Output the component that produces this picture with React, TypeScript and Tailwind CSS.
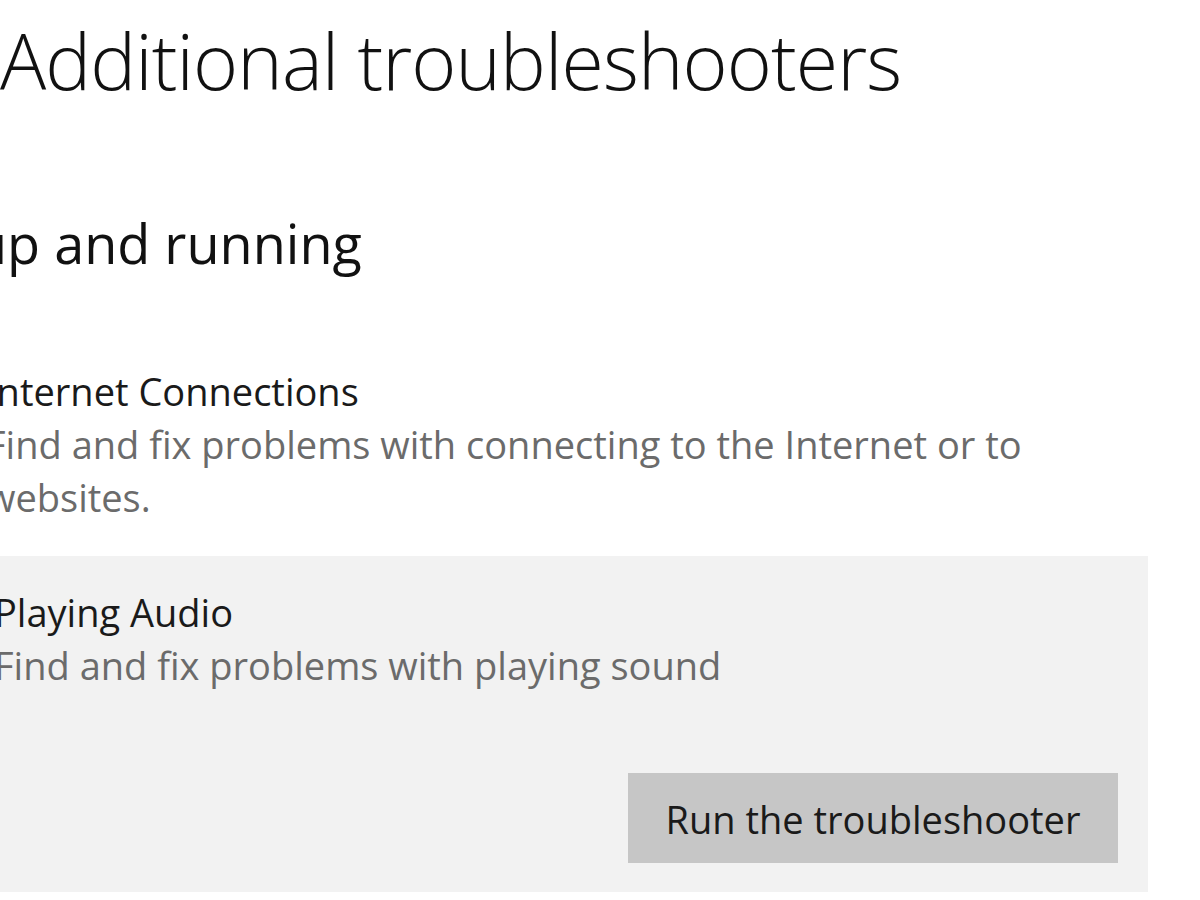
import React from "react";

const font = { fontFamily: '"Open Sans", "Noto Sans", sans-serif' };

function Troubleshooter({
  title,
  description,
  selected,
}: {
  title: string;
  description: string;
  selected?: boolean;
}) {
  if (!selected) {
    return (
      <div className="-ml-[6px] w-[1060px]">
        <div className="text-[38px] leading-[53px] text-[#1a1a1a]">{title}</div>
        <div className="text-[38px] leading-[53px] text-[#6b6b6b]">{description}</div>
      </div>
    );
  }
  return (
    <div className="w-[1148px] bg-[#f2f2f2] pt-[30px] pb-[29px] pr-[30px]">
      <div className="-ml-[6px]">
        <div className="text-[38px] leading-[53px] text-[#1a1a1a]">{title}</div>
        <div className="text-[38px] leading-[53px] text-[#6b6b6b]">{description}</div>
      </div>
      <div className="mt-[81px] flex justify-end">
        <button className="h-[90px] w-[490px] bg-[#c6c6c6] pt-[2px] text-[38px] leading-[88px] text-[#1a1a1a]">
          Run the troubleshooter
        </button>
      </div>
    </div>
  );
}

export default function App() {
  return (
    <div className="h-[900px] w-[1200px] overflow-hidden bg-white" style={font}>
      <h1 className="pt-[11px] text-[77px] font-light leading-[100px] tracking-[-0.9px] text-[#111]">
        Additional troubleshooters
      </h1>
      <h2 className="-ml-[26px] mt-[102px] text-[54px] leading-[60px] text-[#111]">
        up and running
      </h2>
      <div className="mt-[92px] flex flex-col">
        <div className="-ml-[8px]">
          <Troubleshooter
            title="Internet Connections"
            description="Find and fix problems with connecting to the Internet or to websites."
          />
        </div>
        <div className="mt-[32px]">
          <Troubleshooter
            title="Playing Audio"
            description="Find and fix problems with playing sound"
            selected
          />
        </div>
      </div>
    </div>
  );
}
